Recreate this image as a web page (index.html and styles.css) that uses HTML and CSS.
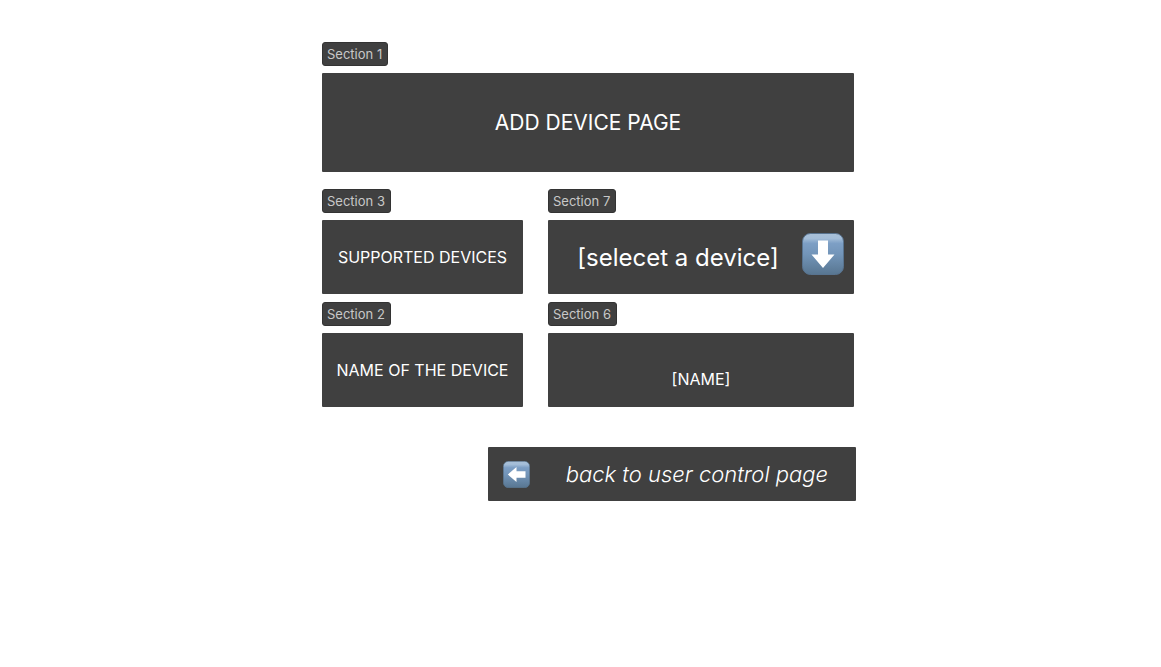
FILE: index.html
```html
<!DOCTYPE html>
<html lang="en">
<head>
<meta charset="utf-8">
<meta name="viewport" content="width=device-width, initial-scale=1">
<title>Add device page</title>
<link rel="stylesheet" href="styles.css">
</head>
<body>
<svg class="defs" width="0" height="0" aria-hidden="true">
  <defs>
    <linearGradient id="tile" x1="0" y1="0" x2="0" y2="1">
      <stop offset="0" stop-color="#a9c0d8"/>
      <stop offset="0.12" stop-color="#a3bdd8"/>
      <stop offset="0.24" stop-color="#7d9fc5"/>
      <stop offset="0.5" stop-color="#7395b9"/>
      <stop offset="1" stop-color="#587691"/>
    </linearGradient>
  </defs>
</svg>
<main class="page">
  <header class="section">
    <span class="chip">Section 1</span>
    <div class="box box-title"><h1 class="title">ADD DEVICE PAGE</h1></div>
  </header>
  <form class="fields">
    <div class="section">
      <span class="chip">Section 3</span>
      <label class="box label" for="device">SUPPORTED DEVICES</label>
    </div>
    <div class="section">
      <span class="chip">Section 7</span>
      <div class="picker">
        <select class="box select" id="device"><option>[selecet a device]</option></select>
        <svg class="picker-icon" viewBox="0 0 42 42" aria-hidden="true">
          <rect x="0.5" y="0.5" width="41" height="41" rx="8" fill="url(#tile)" stroke="#58738f"/>
          <path d="M16 7.500h10v14h6.500L21 35 9.500 21.500H16z" fill="#fff"/>
        </svg>
      </div>
    </div>
    <div class="section">
      <span class="chip">Section 2</span>
      <label class="box label" for="name">NAME OF THE DEVICE</label>
    </div>
    <div class="section">
      <span class="chip">Section 6</span>
      <input class="box input" id="name" type="text" value="[NAME]">
    </div>
  </form>
  <a class="back" href="#">
    <svg class="back-icon" viewBox="0 0 42 42" aria-hidden="true">
      <rect x="0.5" y="0.5" width="41" height="41" rx="8" fill="url(#tile)" stroke="#58738f"/>
      <path d="M35 16v10H21v6.500L7.500 21 21 9.500V16z" fill="#fff"/>
    </svg>
    <span class="back-text">back to user control page</span>
  </a>
</main>
</body>
</html>
```
FILE: styles.css
```css
* {
  box-sizing: border-box;
}

body {
  margin: 0;
  padding: 42px 0 42px 15px;
  background: #fff;
  font-family: Inter, "Liberation Sans", sans-serif;
  color: #fff;
}

.defs {
  position: absolute;
}

.page {
  display: flex;
  flex-direction: column;
  max-width: 532px;
  margin: 0 auto;
}

.section {
  display: flex;
  flex-direction: column;
  align-items: stretch;
  gap: 7px;
}

.chip {
  align-self: flex-start;
  padding: 0 5px 0 4px;
  border: 1px solid #333;
  border-radius: 3px;
  background: #404040;
  color: #c8c8c8;
  font-size: 13px;
  line-height: 22px;
}

.box {
  display: flex;
  align-items: center;
  justify-content: center;
  width: 100%;
  height: 74px;
  margin: 0;
  border: 0;
  border-radius: 1px;
  background: #404040;
  color: #fff;
  font-family: inherit;
  text-align: center;
}

.box-title {
  height: 99px;
}

.title {
  margin: 0;
  font-size: 21px;
  font-weight: 400;
}

.fields {
  display: grid;
  grid-template-columns: 201fr 306fr;
  gap: 8px 25px;
  margin-top: 17px;
}

.label {
  font-size: 16px;
}

.picker {
  position: relative;
}

.select {
  appearance: none;
  padding: 0 66px 0 20px;
  font-size: 24px;
  font-weight: 400;
  text-align-last: center;
}

.picker-icon {
  position: absolute;
  top: 13px;
  right: 10px;
  width: 42px;
  height: 42px;
  pointer-events: none;
}

.input {
  padding: 18px 0 0;
  font-size: 16px;
  font-weight: 400;
}

.back {
  display: flex;
  align-items: center;
  align-self: flex-end;
  gap: 36px;
  margin: 40px -2px 0 0;
  padding: 0 28px 0 15px;
  border-radius: 1px;
  background: #404040;
  color: #fff;
  font-size: 22px;
  font-style: italic;
  font-weight: 300;
  line-height: 54px;
  text-decoration: none;
}

.back-icon {
  width: 27px;
  height: 27px;
}
```
